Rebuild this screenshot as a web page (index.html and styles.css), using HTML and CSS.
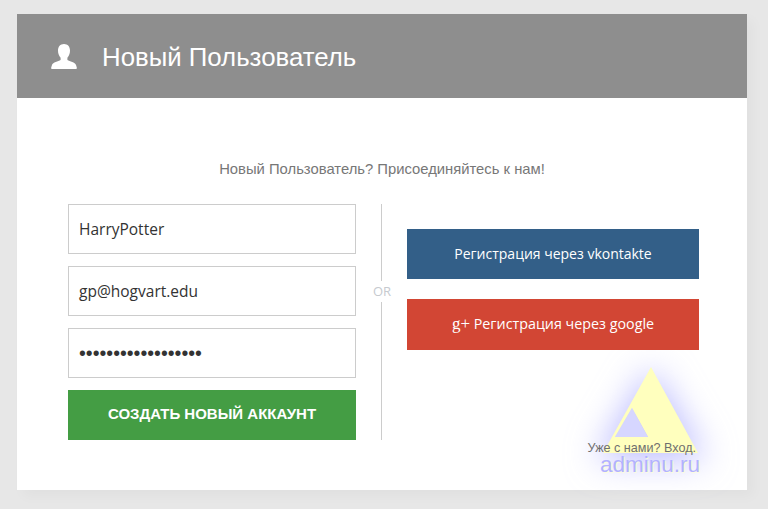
FILE: index.html
```html
<!DOCTYPE html>
<html lang="ru">
<head>
<meta charset="utf-8">
<title>Новый Пользователь</title>
<link rel="stylesheet" href="styles.css">
</head>
<body>
<div class="card">
  <header class="head">
    <svg class="user" viewBox="0 0 26 25" width="26" height="25"><path fill="#fff" d="M13 0c-3.800 0-6 2.800-6 6.600 0 3 1 5.400 2.600 7.200v2.200c-2.300 1.200-7.800 2.400-8.600 5-.3 1-.7 2-.9 3 0 .6.300 1 .9 1h24c.6 0 .9-.4.900-1-.2-1-.6-2-.9-3-.8-2.600-6.300-3.800-8.600-5v-2.200c1.600-1.800 2.600-4.200 2.600-7.200 0-3.800-2.200-6.600-6-6.600z"/></svg>
    <h1 class="title">Новый Пользователь</h1>
  </header>
  <main class="body">
    <p class="lead">Новый Пользователь? Присоединяйтесь к нам!</p>
    <div class="columns">
      <form class="form">
        <div class="field">HarryPotter</div>
        <div class="field">gp@hogvart.edu</div>
        <div class="field dots">••••••••••••••••••</div>
        <button class="submit" type="button">СОЗДАТЬ НОВЫЙ АККАУНТ</button>
      </form>
      <div class="divider"><span class="or">OR</span></div>
      <div class="social">
        <a class="soc vk">Регистрация через vkontakte</a>
        <a class="soc gp"><span class="gplus">g+</span> Регистрация через google</a>
      </div>
    </div>
    <p class="foot">Уже с нами? Вход.</p>
  </main>
  <div class="mark">
    <svg class="tri" viewBox="0 0 180 170" width="180" height="170">
      <defs><filter id="glow" x="-50%" y="-50%" width="200%" height="200%"><feGaussianBlur stdDeviation="17"/></filter></defs>
      <path fill="#bcbcff" filter="url(#glow)" d="M91 17 146 110H36z"/>
      <path fill="#ffffbe" fill-rule="evenodd" d="M91 17 138 103H43zM72 58 55 87H88z"/>
      <path fill="#d6d6ff" d="M72 58 55 87H88z"/>
    </svg>
    <span class="mark-text">adminu.ru</span>
  </div>
</div>
</body>
</html>
```
FILE: styles.css
```css
html, body { margin: 0; height: 509px; overflow: hidden; }
body { background: #e7e7e7; padding: 14px 21px 0 17px; box-sizing: border-box; font-family: "Liberation Sans", Arial, sans-serif; }
.card { position: relative; width: 730px; height: 476px; background: #fff; box-shadow: 6px 6px 12px rgba(0,0,0,.03); }
.head { height: 84px; background: #8e8e8e; display: flex; align-items: center; padding-left: 34px; gap: 26px; box-sizing: border-box; }
.user { flex: none; margin-top: 1px; }
.title { margin: 2px 0 0 -1px; font-size: 25.800px; font-weight: 400; color: #fff; }
.body { padding: 0 48px 0 51px; position: relative; z-index: 2; }
.lead { margin: 0; padding: 62px 3px 0 0; height: 44px; line-height: 18px; text-align: center; font-size: 14.8px; color: #777; }
.columns { display: flex; height: 236px; }
.form { width: 288px; display: flex; flex-direction: column; gap: 12px; }
.field { height: 50px; box-sizing: border-box; border: 1px solid #ccc; padding: 0 10px; line-height: 48px; font-family: "Open Sans", sans-serif; font-size: 15.500px; color: #333; }
.dots { font-family: "Liberation Sans", sans-serif; font-size: 19.500px; }
.submit { height: 50px; border: 0; background: #449d44; color: #fff; font: bold 15px/48px "Liberation Sans", sans-serif; padding: 0 0 2px; }
.divider { width: 51px; position: relative; display: flex; justify-content: center; align-items: flex-start; padding-top: 77px; box-sizing: border-box; }
.divider::before { content: ""; position: absolute; left: 25px; top: 0; bottom: 0; width: 1px; background: #ccc; }
.or { position: relative; background: #fff; color: #c6cacf; font-size: 13px; font-family: "Open Sans", sans-serif; line-height: 21px; padding-left: 1px; }
.social { width: 292px; padding-top: 25px; display: flex; flex-direction: column; gap: 20px; }
.soc { display: block; height: 50px; line-height: 50px; text-align: center; color: #fff; font-family: "Open Sans", sans-serif; font-size: 14px; }
.vk { background: #335f88; }
.gp { background: #d24634; height: 51px; line-height: 49px; font-size: 14.300px; }
.gplus { font-family: "Liberation Serif", serif; font-size: 17px; }
.foot { position: absolute; right: 51px; top: 342px; margin: 0; font-size: 12.600px; line-height: 16px; color: #6f6f6f; }
.mark { position: absolute; left: 543px; top: 336px; width: 180px; height: 140px; z-index: 1; }
.tri { position: absolute; left: 0; top: 0; }
.mark-text { position: absolute; left: 40px; top: 102px; font-size: 22.500px; line-height: 26px; color: #b2b2ff; text-shadow: 1px 1px 1px #ffffd8; }
```
